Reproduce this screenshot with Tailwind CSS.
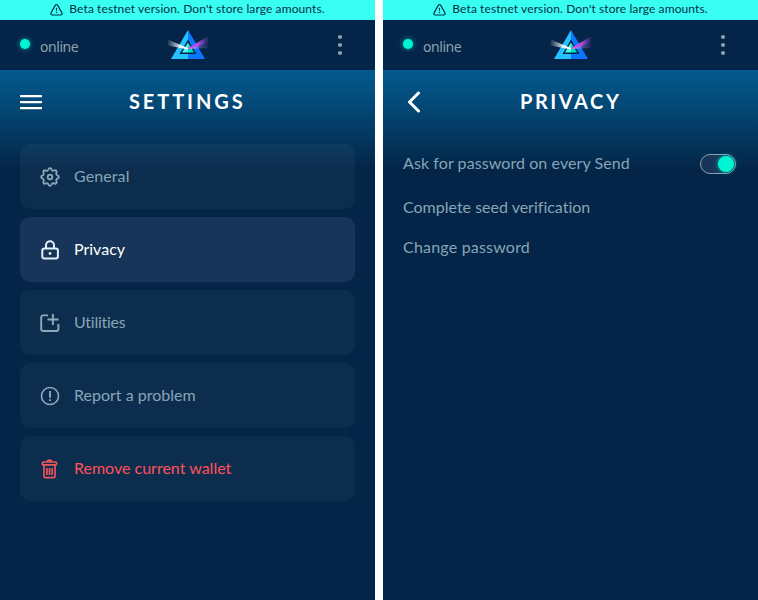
<!DOCTYPE html>
<html lang="en">
<head>
<meta charset="utf-8">
<title>Wallet settings</title>
<script src="https://cdn.jsdelivr.net/npm/@tailwindcss/browser@4"></script>
</head>
<body class="flex h-[600px] w-[758px] gap-2 overflow-hidden bg-white font-[Lato,sans-serif] text-[16px] text-[#86a5b5] [font-variant-ligatures:none]">

<svg class="absolute size-0" aria-hidden="true">
  <defs>
    <linearGradient id="white-ray" x1="0" x2="1"><stop offset="0" stop-color="#fff" stop-opacity=".05"/><stop offset=".65" stop-color="#fff" stop-opacity=".9"/><stop offset="1" stop-color="#fff"/></linearGradient>
    <linearGradient id="pink-ray" x1="0" x2="1"><stop offset="0" stop-color="#e23cf5"/><stop offset=".5" stop-color="#b44fe8"/><stop offset="1" stop-color="#a44fe0" stop-opacity=".1"/></linearGradient>
    <linearGradient id="violet-ray" x1="0" x2="1"><stop offset="0" stop-color="#d9a0ff"/><stop offset="1" stop-color="#7a5be0" stop-opacity=".1"/></linearGradient>
    <symbol id="logo" viewBox="0 0 42 30">
      <path d="M21 0 4 29h17Z" fill="#25c2ff"/><path d="M21 0 38 29H21Z" fill="#0b76ff"/>
      <path d="M21 9.500 12.500 24h17Z" fill="#042548"/>
      <path d="M21 12.500 15 22.500H21Z" fill="#39fff2"/><path d="M21 12.500 27 22.500H21Z" fill="#00e2c2"/>
      <path d="M.5 9.500 21 18v1.500L.5 15.500Z" fill="url(#white-ray)"/>
      <path d="M21 18 41 6.500v6L21 19.500Z" fill="url(#pink-ray)"/>
      <path d="M21 19 41 12.500v5.500Z" fill="url(#violet-ray)"/>
    </symbol>
    <symbol id="warning" viewBox="0 0 14 14">
      <path d="M5.800 2.300 1.100 10.600a1.500 1.500 0 0 0 1.300 2.300h9.200a1.500 1.500 0 0 0 1.300-2.300L8.200 2.300a1.400 1.400 0 0 0-2.400 0ZM7 5v3.300M7 9.500v1.300" fill="none" stroke="#032e49" stroke-width="1.200"/>
    </symbol>
    <path id="tooth" d="M-1.700-7.100C-1.300-9.400 1.300-9.400 1.700-7.100Q2.500-6 3.820-6.220"/>
  </defs>
</svg>

<section class="flex w-[375px] flex-col bg-[#042548]">
  <div class="flex h-5 items-center justify-center gap-[6px] bg-[#39fff2] text-[12px] text-[#032e49]">
    <svg class="-mt-px size-[13px]"><use href="#warning"/></svg>
    <span class="-mt-[2px] whitespace-nowrap tracking-[0.1px]">Beta testnet version. Don't store large amounts.</span>
  </div>
  <header class="flex h-[50px] items-center px-5">
    <span class="-mt-[2px] size-[10px] rounded-full bg-[#00f6d2] shadow-[0_0_5px_#00f6d2aa]"></span>
    <span class="ml-[10px] mt-[3px] w-[127px] font-['Noto_Sans'] text-[14px] leading-5 tracking-[-0.450px] text-[#8da1ad]">online</span>
    <svg class="h-[30px] w-[42px]"><use href="#logo"/></svg>
    <svg class="ml-auto mr-3 h-[22px] w-[6px]" fill="#8da1ad"><circle cx="3" cy="3" r="2.100"/><circle cx="3" cy="11" r="2.100"/><circle cx="3" cy="19" r="2.100"/></svg>
  </header>
  <main class="flex grow flex-col bg-[linear-gradient(180deg,#035b8f_0px,#042548_100px)] px-5">
    <div class="flex h-[74px] items-start">
      <svg class="mt-[24px] h-4 w-[22px]" fill="#fff"><rect y="1" width="22" height="2.200" rx=".6"/><rect y="7" width="22" height="2.200" rx=".6"/><rect y="13" width="22" height="2.200" rx=".6"/></svg>
      <h1 class="ml-[87px] mt-[17px] text-[20px] font-bold leading-7 tracking-[2.900px] text-white">SETTINGS</h1>
    </div>
    <nav class="flex flex-col gap-2">
      <a class="flex h-[65px] items-center gap-[14px] rounded-[10px] bg-white/4 pl-5">
        <svg class="size-5" viewBox="-10 -10 20 20" fill="none" stroke="#8da9b9" stroke-width="1.800"><use href="#tooth"/><use href="#tooth" transform="rotate(45)"/><use href="#tooth" transform="rotate(90)"/><use href="#tooth" transform="rotate(135)"/><use href="#tooth" transform="rotate(180)"/><use href="#tooth" transform="rotate(225)"/><use href="#tooth" transform="rotate(270)"/><use href="#tooth" transform="rotate(315)"/><circle r="2.300"/></svg>
        <span class="-mt-px tracking-[0.1px]">General</span>
      </a>
      <a class="flex h-[65px] items-center gap-[14px] rounded-[10px] bg-[#173558] pl-5 text-white">
        <svg class="size-5" viewBox="0 0 20 20" fill="none" stroke="#dff0fa" stroke-width="2"><rect x="2.300" y="8.400" width="15.600" height="10" rx="2.200"/><path d="M6 8.400V5.300a4 4 0 0 1 8 0v3.100"/><circle cx="10" cy="13.500" r="1.400" fill="#dff0fa" stroke="none"/></svg>
        <span class="-mt-px">Privacy</span>
      </a>
      <a class="flex h-[65px] items-center gap-[14px] rounded-[10px] bg-white/4 pl-5">
        <svg class="size-5" viewBox="0 0 20 20" fill="none" stroke="#8da9b9" stroke-width="1.900"><path d="M8 2.400H3.200A2 2 0 0 0 1.200 4.400V16a2 2 0 0 0 2 2h13.200a2 2 0 0 0 2-2v-5M12.900 1v11M7.500 6.500h11"/></svg>
        <span class="-mt-px tracking-[-0.250px]">Utilities</span>
      </a>
      <a class="flex h-[65px] items-center gap-[14px] rounded-[10px] bg-white/4 pl-5">
        <svg class="size-5" viewBox="0 0 20 20" fill="none" stroke="#8da9b9" stroke-width="1.600"><circle cx="10" cy="10" r="8.500"/><path d="M10 5v6.800M10 13.200v1.800" stroke-width="1.900"/></svg>
        <span class="-mt-px">Report a problem</span>
      </a>
      <a class="flex h-[65px] items-center gap-[14px] rounded-[10px] bg-white/4 pl-5 text-[#ff5158]">
        <svg class="size-5" viewBox="0 0 20 20" fill="none" stroke="#f0555a" stroke-width="1.700"><rect x="2.500" y="3" width="14" height="2.900" rx="1"/><path d="M7.300 2.900a2.200 1.800 0 0 1 4.400 0M4 6.200v11a1.500 1.500 0 0 0 1.500 1.500h8a1.500 1.500 0 0 0 1.500-1.500v-11M6.900 9v7M9.500 9v7M12.100 9v7"/></svg>
        <span class="-mt-px">Remove current wallet</span>
      </a>
    </nav>
  </main>
</section>

<section class="flex w-[375px] flex-col bg-[#042548]">
  <div class="flex h-5 items-center justify-center gap-[6px] bg-[#39fff2] text-[12px] text-[#032e49]">
    <svg class="-mt-px size-[13px]"><use href="#warning"/></svg>
    <span class="-mt-[2px] whitespace-nowrap tracking-[0.1px]">Beta testnet version. Don't store large amounts.</span>
  </div>
  <header class="flex h-[50px] items-center px-5">
    <span class="-mt-[2px] size-[10px] rounded-full bg-[#00f6d2] shadow-[0_0_5px_#00f6d2aa]"></span>
    <span class="ml-[10px] mt-[3px] w-[127px] font-['Noto_Sans'] text-[14px] leading-5 tracking-[-0.450px] text-[#8da1ad]">online</span>
    <svg class="h-[30px] w-[42px]"><use href="#logo"/></svg>
    <svg class="ml-auto mr-3 h-[22px] w-[6px]" fill="#8da1ad"><circle cx="3" cy="3" r="2.100"/><circle cx="3" cy="11" r="2.100"/><circle cx="3" cy="19" r="2.100"/></svg>
  </header>
  <main class="flex grow flex-col bg-[linear-gradient(180deg,#035b8f_0px,#042548_100px)] px-5">
    <div class="flex h-[74px] items-start">
      <svg class="ml-1 mt-[21px] h-[22px] w-[14px]" fill="none" stroke="#fff" stroke-width="3" stroke-linecap="round" stroke-linejoin="round"><path d="M11.500 2 2.500 11l9 9"/></svg>
      <h1 class="ml-[99px] mt-[17px] text-[20px] font-bold leading-7 tracking-[2.550px] text-white">PRIVACY</h1>
    </div>
    <div class="flex h-10 items-center justify-between pr-[2px]">
      <span class="-mt-[2px] tracking-[0.080px]">Ask for password on every Send</span>
      <span class="flex h-5 w-9 items-center justify-end rounded-full border border-[#8da1ad] bg-[#173558] pr-[1px]"><span class="size-4 rounded-full bg-[#00f6d2] shadow-[0_0_5px_#00f6d2aa]"></span></span>
    </div>
    <div class="mt-1 flex h-10 items-center"><span class="-mt-[2px]">Complete seed verification</span></div>
    <div class="flex h-10 items-center"><span class="-mt-[2px] tracking-[0.200px]">Change password</span></div>
  </main>
</section>
</body>
</html>
